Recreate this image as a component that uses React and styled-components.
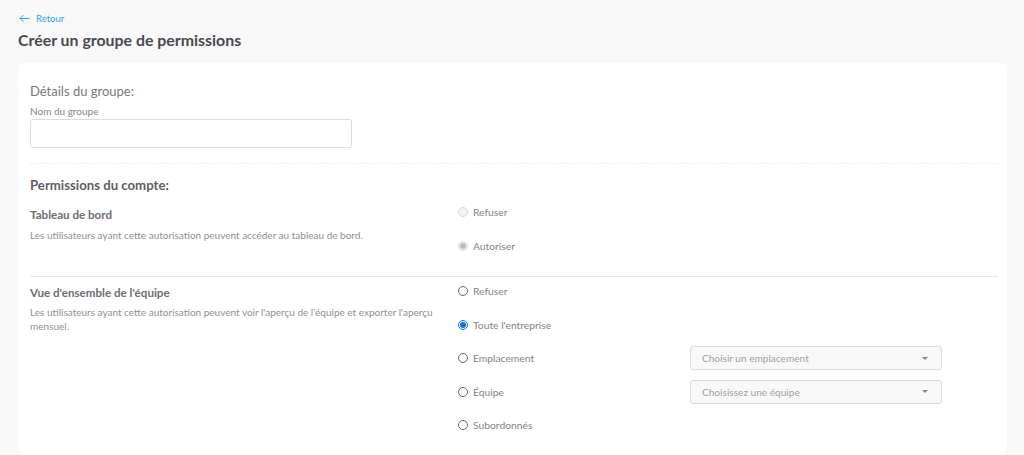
import React from "react";
import styled, { createGlobalStyle } from "styled-components";

const GlobalStyle = createGlobalStyle`
  html, body {
    margin: 0;
    height: 455px;
    overflow: hidden;
    background: #f8f8f8;
    font-family: Lato, "Open Sans", sans-serif;
  }
`;

const Page = styled.div`
  padding: 12px 17px 0 18px;
`;

const BackLink = styled.a`
  display: flex;
  align-items: center;
  gap: 6px;
  height: 12px;
  padding-left: 1px;
  color: #2aa7ee;
  font-size: 9.5px;
`;

const Title = styled.h1`
  margin: 5px 0 0;
  font-size: 15.9px;
  line-height: 22px;
  font-weight: 700;
  color: #4a4a51;
`;

const Card = styled.div`
  box-sizing: border-box;
  margin-top: 12px;
  height: 392px;
  padding: 19px 9px 0 12px;
  background: #fff;
  border-radius: 6px;
`;

const SubTitle = styled.h2`
  margin: 0;
  font-size: 13px;
  line-height: 18px;
  font-weight: 400;
  color: #77777f;
`;

const FieldLabel = styled.label`
  display: block;
  margin-top: 4px;
  font-size: 10px;
  line-height: 14px;
  color: #85858d;
`;

const TextInput = styled.input`
  display: block;
  box-sizing: border-box;
  width: 322px;
  height: 29px;
  margin-top: 1px;
  border: 1px solid #dcdce0;
  border-radius: 3px;
  background: #fff;
`;

const Dashed = styled.div`
  margin-top: 15px;
  border-top: 1px dashed #efeff1;
`;

const SectionTitle = styled.h3`
  margin: 13px 0 0;
  font-size: 13.2px;
  line-height: 17px;
  font-weight: 700;
  color: #5f5f67;
`;

const Permission = styled.section`
  display: grid;
  grid-template-columns: 428px 1fr;
  margin-top: ${(p) => p.$top}px;
  border-top: ${(p) => (p.$line ? "1px solid #e6e6e9" : "none")};
`;

const Info = styled.div`
  padding-top: ${(p) => p.$top}px;
`;

const InfoTitle = styled.div`
  font-size: 11.6px;
  line-height: 14px;
  font-weight: 700;
  color: #6d6d75;
`;

const InfoText = styled.p`
  margin: 5.5px 0 0;
  width: 410px;
  font-size: 10px;
  line-height: 14px;
  color: #8f8f97;
`;

const Options = styled.div`
  display: flex;
  flex-direction: column;
  gap: 13.6px;
  padding-top: ${(p) => p.$top}px;
`;

const Option = styled.div`
  display: flex;
  align-items: center;
  height: 20px;
`;

const RadioMark = styled.span`
  box-sizing: border-box;
  flex: none;
  display: flex;
  align-items: center;
  justify-content: center;
  width: 10px;
  height: 10px;
  border-radius: 50%;
  border: 1px solid ${(p) => (p.$off ? "#dadadc" : p.$on ? "#0f74e0" : "#66666c")};
  background: ${(p) => (p.$off ? "#f4f4f5" : "#fff")};

  &::after {
    content: "";
    display: ${(p) => (p.$on ? "block" : "none")};
    width: 6px;
    height: 6px;
    border-radius: 50%;
    background: ${(p) => (p.$off ? "#bdbdc0" : "#0f74e0")};
  }
`;

const OptionText = styled.span`
  width: 217px;
  flex: none;
  margin-left: 5px;
  font-size: 10.3px;
  color: #83838b;
`;

const Select = styled.div`
  box-sizing: border-box;
  display: flex;
  align-items: center;
  justify-content: space-between;
  width: 252px;
  height: 24px;
  padding: 0 13px 0 11px;
  border: 1px solid #dcdce0;
  border-radius: 3px;
  background: #f8f8f8;
  font-size: 10.1px;
  color: #a0a0a6;
`;

const Caret = styled.span`
  width: 0;
  height: 0;
  border-left: 3.5px solid transparent;
  border-right: 3.5px solid transparent;
  border-top: 3.5px solid #85858b;
`;

function Radio({ label, on, off, placeholder }) {
  return (
    <Option>
      <RadioMark $on={on} $off={off} />
      <OptionText>{label}</OptionText>
      {placeholder && (
        <Select>
          {placeholder}
          <Caret />
        </Select>
      )}
    </Option>
  );
}

export default function App() {
  return (
    <>
      <GlobalStyle />
      <Page>
        <BackLink>
          <svg width="11" height="9" viewBox="0 0 11 9" fill="none" stroke="#2aa7ee" strokeWidth="1">
            <path d="M10.5 4.5H1M4.5 1L1 4.5L4.5 8" />
          </svg>
          Retour
        </BackLink>
        <Title>Créer un groupe de permissions</Title>
        <Card>
          <SubTitle>Détails du groupe:</SubTitle>
          <FieldLabel>Nom du groupe</FieldLabel>
          <TextInput />
          <Dashed />
          <SectionTitle>Permissions du compte:</SectionTitle>
          <Permission $top={1}>
            <Info $top={13}>
              <InfoTitle>Tableau de bord</InfoTitle>
              <InfoText>Les utilisateurs ayant cette autorisation peuvent accéder au tableau de bord.</InfoText>
            </Info>
            <Options $top={7}>
              <Radio label="Refuser" off />
              <Radio label="Autoriser" on off />
            </Options>
          </Permission>
          <Permission $top={20} $line>
            <Info $top={9}>
              <InfoTitle>Vue d'ensemble de l'équipe</InfoTitle>
              <InfoText>
                Les utilisateurs ayant cette autorisation peuvent voir l'aperçu de l'équipe et exporter l'aperçu mensuel.
              </InfoText>
            </Info>
            <Options $top={4.5}>
              <Radio label="Refuser" />
              <Radio label="Toute l'entreprise" on />
              <Radio label="Emplacement" placeholder="Choisir un emplacement" />
              <Radio label="Équipe" placeholder="Choisissez une équipe" />
              <Radio label="Subordonnés" />
            </Options>
          </Permission>
        </Card>
      </Page>
    </>
  );
}
